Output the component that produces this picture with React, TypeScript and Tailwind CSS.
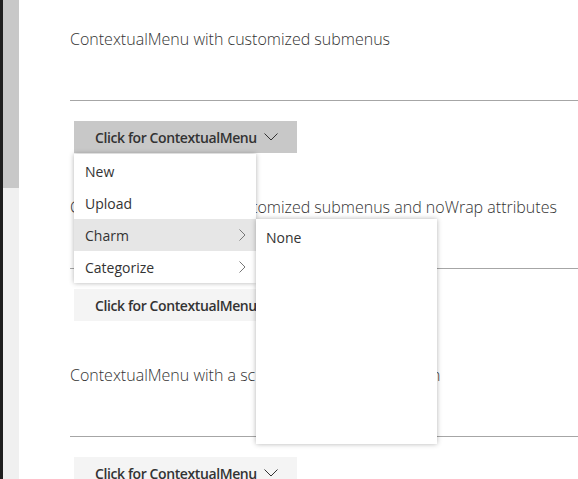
import React from "react";

const font = { fontFamily: '"Open Sans", "Noto Sans", sans-serif' };

function ChevronDown() {
  return (
    <svg width="14" height="8" viewBox="0 0 14 8" fill="none">
      <path d="M0.5 0.5 L7 7 L13.5 0.5" stroke="#333" strokeWidth="1" />
    </svg>
  );
}

function ChevronRight() {
  return (
    <svg width="7" height="12" viewBox="0 0 7 12" fill="none">
      <path d="M0.5 0.5 L6 6 L0.5 11.5" stroke="#777" strokeWidth="1" />
    </svg>
  );
}

function Section({ title, active }: { title: string; active?: boolean }) {
  return (
    <div className="flex flex-col">
      <div className="h-[22px] text-[16px] leading-[22px] font-light text-[#333] whitespace-nowrap">{title}</div>
      <div className="mt-[50px] h-px bg-[#a6a6a6]" />
      <div className="mt-[20px] ml-[4px]">
        <button
          className={`flex h-[32px] w-[223px] items-center pl-[21px] text-[14px] font-semibold text-[#333] ${
            active ? "bg-[#c8c8c8]" : "bg-[#f4f4f4]"
          }`}
        >
          <span className="whitespace-nowrap tracking-[-0.4px]">Click for ContextualMenu</span>
          <span className="ml-[7px] flex items-center">
            <ChevronDown />
          </span>
        </button>
      </div>
      <div className="h-[43px]" />
    </div>
  );
}

export default function App() {
  return (
    <div className="relative flex h-[479px] w-[578px] overflow-hidden bg-white" style={font}>
      <div className="w-[3px] shrink-0 bg-[#1f1f1f]" />
      <div className="flex w-[16px] shrink-0 flex-col bg-[#f0f0f0]">
        <div className="h-[188px] bg-[#c8c8c8]" />
      </div>
      <div className="flex-1 pl-[51px] pt-[28px]">
        <Section title="ContextualMenu with customized submenus" active />
        <Section title="ContextualMenu with customized submenus and noWrap attributes" />
        <Section title="ContextualMenu with a scrollbar and fixed direction" />
      </div>

      <div className="absolute left-[74px] top-[154px] w-[182px] bg-white pt-px text-[14px] text-[#333] shadow-[0_0_5px_rgba(0,0,0,0.3)]">
        <div className="flex h-[32px] items-center pl-[11px]">New</div>
        <div className="flex h-[32px] items-center pl-[11px]">Upload</div>
        <div className="flex h-[32px] items-center justify-between bg-[#e6e6e6] pl-[11px] pr-[10px]">
          <span>Charm</span>
          <ChevronRight />
        </div>
        <div className="flex h-[32px] items-center justify-between pl-[11px] pr-[10px]">
          <span>Categorize</span>
          <ChevronRight />
        </div>
      </div>

      <div className="absolute left-[256px] top-[219px] h-[225px] w-[181px] bg-white text-[14px] text-[#333] shadow-[0_0_5px_rgba(0,0,0,0.3)]">
        <div className="flex h-[36px] items-center pl-[10px]">None</div>
      </div>
    </div>
  );
}
